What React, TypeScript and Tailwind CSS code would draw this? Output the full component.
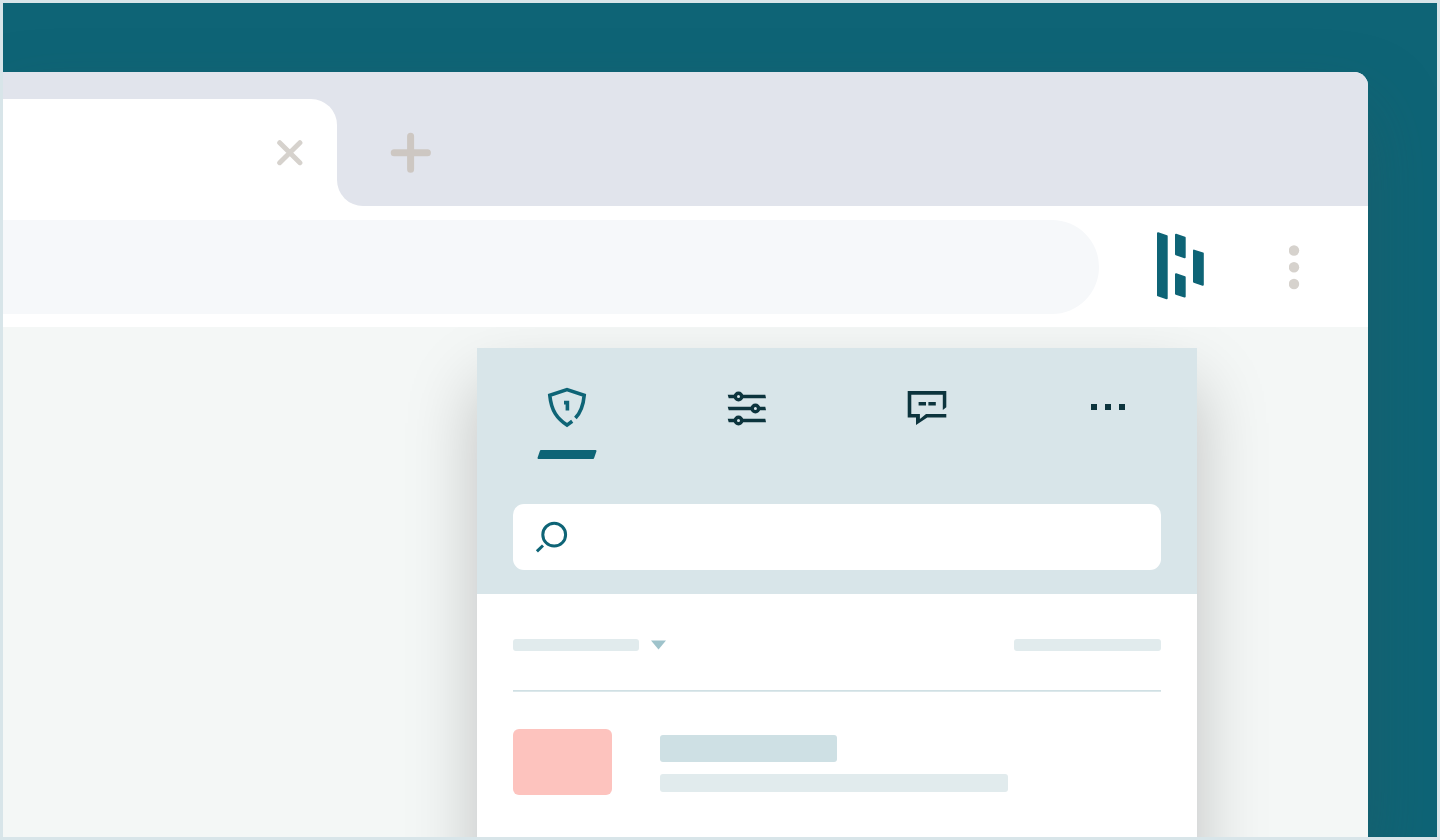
function TabStrip() {
  return (
    <div className="flex h-[134px] shrink-0 overflow-hidden rounded-tr-[14px] bg-white">
      <div className="w-[334px] bg-[#e1e4ec] pt-[27px]">
        <div className="flex h-[107px] items-center justify-end rounded-tr-[26px] bg-white pr-[34px]">
          <svg className="h-[27px] w-[27px]" viewBox="0 0 27 27" fill="none" stroke="#d6d2cd" strokeWidth="5" strokeLinecap="round">
            <path d="M3.7 3.7 23.9 23.7M23.9 3.7 3.7 23.7" />
          </svg>
        </div>
      </div>
      <div className="flex flex-1 items-center rounded-bl-[26px] bg-[#e1e4ec] pt-[27px] pl-[53px]">
        <svg className="h-[41px] w-[41px]" viewBox="0 0 41 41" fill="none" stroke="#cdc7c2" strokeWidth="7" strokeLinecap="round">
          <path d="M20.6 4.2V37.3M4.2 20.7H37.4" />
        </svg>
      </div>
    </div>
  );
}

function Toolbar() {
  return (
    <div className="flex h-[121px] shrink-0 items-center bg-white">
      <div className="h-[94px] w-[1096px] rounded-r-full bg-[#f6f8fa]" />
      <svg className="ml-[57px] h-[70px] w-[50px]" viewBox="0 1 50 70" fill="#0e6476" stroke="#0e6476" strokeWidth="2" strokeLinejoin="round">
        <path d="M2 2.3 10.7 5.2V67.2L2 64.4Z" />
        <path d="M20 3.8 28.7 6.7V26.2L20 23.2Z" />
        <path d="M38 19.6 46.8 22.5V53.7L38 50.8Z" />
        <path d="M20 43.3 28.7 46.2V65.6L20 62.7Z" />
      </svg>
      <svg className="ml-[83px] h-[46px] w-[12px]" viewBox="0 0 12 46" fill="#d6d2cd">
        <circle cx="5" cy="6.5" r="5.2" />
        <circle cx="5" cy="23.3" r="5.2" />
        <circle cx="5" cy="40" r="5.2" />
      </svg>
    </div>
  );
}

function ShieldIcon() {
  return (
    <svg className="h-[42px] w-[42px]" viewBox="0 0 42 42" fill="none" stroke="#0e6476" strokeWidth="3.6">
      <path d="M26.2 35.3 21 39.1C11.2 32.4 5.3 25 3.8 9.3L21 3.6 38.2 9.3C37.4 18.6 35 26 29.4 32" />
      <path d="M18 16.6H21.4V24.6" strokeWidth="3.6" />
    </svg>
  );
}

function SlidersIcon() {
  return (
    <svg className="h-[42px] w-[42px]" viewBox="0 0 42 42" fill="none">
      <path fill="#0c343d" d="M1.7 8.8H39.3L40 12.3H2.7ZM1.7 20.8H39.3L40 24.3H2.7ZM1.7 32.8H39.3L40 36.3H2.7Z" />
      <g fill="#d8e5e9" stroke="#0c343d" strokeWidth="3.4">
        <circle cx="12.5" cy="10.5" r="3.2" />
        <circle cx="29.4" cy="22.5" r="3.2" />
        <circle cx="12.5" cy="34.5" r="3.2" />
      </g>
    </svg>
  );
}

function ChatIcon() {
  return (
    <svg className="h-[42px] w-[42px]" viewBox="0 0 42 42" fill="#0c343d">
      <path d="M1.7 5.1H40.3V21.3L36.8 23.9V8.8H5.3V28H13.9V33L20 28H40.3V31.6H21.3L10 39V31.6H1.7Z" />
      <path d="M12.6 16H20V19.6H12.6ZM22.4 16H29.8V19.6H22.4Z" />
    </svg>
  );
}

function PanelHeader() {
  return (
    <div className="h-[246px] bg-[#d8e5e9] px-9 pt-[38px]">
      <div className="-mx-9 grid grid-cols-4">
        <div className="flex flex-col items-center">
          <ShieldIcon />
          <svg className="mt-[21px] h-[11px] w-[60px]" viewBox="0 0 60 11" fill="#0e6476" stroke="#0e6476" strokeWidth="2" strokeLinejoin="round">
            <path d="M3.9 2H58.5L56.1 9H1.5Z" />
          </svg>
        </div>
        <div className="flex justify-center"><SlidersIcon /></div>
        <div className="flex justify-center"><ChatIcon /></div>
        <div className="flex justify-center gap-2 pt-[18px] pl-[2px]">
          <span className="size-1.5 bg-[#0c343d]" />
          <span className="size-1.5 bg-[#0c343d]" />
          <span className="size-1.5 bg-[#0c343d]" />
        </div>
      </div>
      <div className="mt-11 flex h-[66px] items-center rounded-[11px] bg-white pl-[21px]">
        <svg className="h-[34px] w-[34px]" viewBox="0 0 34 34" fill="none" stroke="#0e6476" strokeWidth="3">
          <circle cx="20.2" cy="14.7" r="11.4" />
          <path d="M9 25.5 2.9 31.4" />
        </svg>
      </div>
    </div>
  );
}

function PanelBody() {
  return (
    <div className="px-9 pt-[45px]">
      <div className="flex items-center">
        <div className="h-3 w-[126px] rounded-[3px] bg-[#e1ebed]" />
        <svg className="ml-3 h-[12px] w-[15px]" viewBox="0 0 15 12" fill="#9fc3cb">
          <path d="M0 1.4H15L7.5 10.5Z" />
        </svg>
        <div className="ml-auto h-3 w-[147px] rounded-[3px] bg-[#e1ebed]" />
      </div>
      <svg className="mt-[38px] block h-[4px] w-[648px]" viewBox="0 0 648 4" fill="#d0e0e4">
        <path d="M0 1H648V2.7H0Z" />
      </svg>
      <div className="mt-9 flex items-start">
        <div className="h-[66px] w-[99px] rounded-[6px] bg-[#fdc3be]" />
        <div className="ml-12 pt-1.5">
          <div className="h-[27px] w-[177px] rounded-[3px] bg-[#cee0e4]" />
          <div className="mt-3 h-[18px] w-[348px] rounded-[3px] bg-[#e1ebed]" />
        </div>
      </div>
    </div>
  );
}

export default function App() {
  return (
    <div className="h-[840px] w-[1440px] border-[3px] border-[#d8e5e9]">
      <div className="h-full overflow-hidden bg-[#0e6476] pt-[69px]">
        <div className="flex h-[765px] w-[1365px] flex-col rounded-tr-[14px] shadow-[0_36px_72px_rgba(50,85,90,0.35)]">
          <TabStrip />
          <Toolbar />
          <div className="flex-1 overflow-hidden bg-[#f4f7f6] pt-[21px] pl-[474px]">
            <div className="h-[600px] w-[720px] bg-white shadow-[0_36px_66px_rgba(0,0,0,0.22)]">
              <PanelHeader />
              <PanelBody />
            </div>
          </div>
        </div>
      </div>
    </div>
  );
}
